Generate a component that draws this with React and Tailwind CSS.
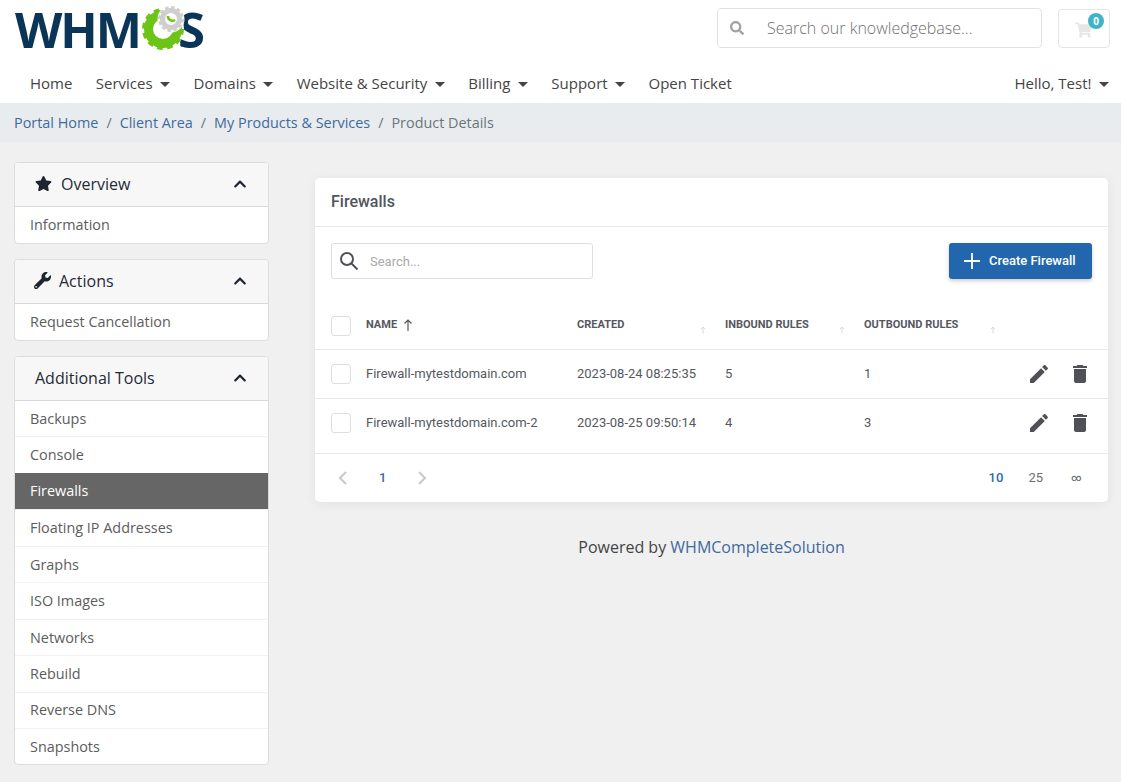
import React from "react";
import {
  FaChevronUp,
  FaSearch,
  FaShoppingCart,
  FaStar,
  FaWrench,
} from "react-icons/fa";

const NAV_ITEMS = [
  { label: "Home" },
  { label: "Services", caret: true },
  { label: "Domains", caret: true },
  { label: "Website & Security", caret: true },
  { label: "Billing", caret: true },
  { label: "Support", caret: true },
  { label: "Open Ticket" },
];

const TOOLS = [
  "Backups",
  "Console",
  "Firewalls",
  "Floating IP Addresses",
  "Graphs",
  "ISO Images",
  "Networks",
  "Rebuild",
  "Reverse DNS",
  "Snapshots",
];

const FIREWALLS = [
  { name: "Firewall-mytestdomain.com", created: "2023-08-24 08:25:35", inbound: 5, outbound: 1, height: "h-[49px]" },
  { name: "Firewall-mytestdomain.com-2", created: "2023-08-25 09:50:14", inbound: 4, outbound: 3, height: "h-[55px] pb-[6px]" },
];

const Caret = () => (
  <span className="ml-[7.5px] inline-block w-0 h-0 border-x-[5px] border-x-transparent border-t-[5px] border-t-[#444] align-[2px]" />
);

const Logo = () => (
  <div className="relative w-[200px] h-[60px] select-none">
    <div className="flex font-['Open_Sans',sans-serif] font-bold text-[49px] leading-[58px] tracking-[-2px] text-[#0b3556]">
      <span>WHM</span>
      <span className="ml-[38px]">S</span>
    </div>
    <svg className="absolute left-[124px] top-0 w-[64px] h-[52px]" viewBox="0 0 64 52">
      <circle cx="24" cy="29" r="21" fill="#fff" />
      <circle cx="24" cy="29" r="14.5" fill="none" stroke="#6cc417" strokeWidth="9" />
      <circle cx="24" cy="29" r="18.5" fill="none" stroke="#6cc417" strokeWidth="5" strokeDasharray="5.4 4.3" />
      <circle cx="32" cy="19" r="13.5" fill="#fff" />
      <circle cx="32" cy="19" r="8.5" fill="none" stroke="#cfcfcf" strokeWidth="5" />
      <circle cx="32" cy="19" r="11.5" fill="none" stroke="#cfcfcf" strokeWidth="3" strokeDasharray="3.4 2.6" />
      <path d="M29 16a4.5 4.5 0 0 0 7 4" fill="none" stroke="#6cc417" strokeWidth="2.5" />
    </svg>
  </div>
);

const SidePanel = ({ icon, title, items, active }) => (
  <div className="mb-[15.5px] bg-white rounded border border-[#dcdcdc] overflow-hidden font-['Open_Sans',sans-serif]">
    <div className="h-[44px] pb-[2px] bg-[#f7f7f7] border-b border-[#d8d8d8] flex items-center pl-5 pr-[21px] text-[#1f2a38] text-[16px]">
      {icon}
      <span>{title}</span>
      <FaChevronUp className="ml-auto w-[14px] h-[14px] text-[#1c2530]" />
    </div>
    {items.map((item) => (
      <div
        key={item}
        className={`flex items-center pl-[15px] text-[14.4px] border-b last:border-b-0 border-[#f1f1f1] ${
          item === active ? "-mt-px h-[37.45px] bg-[#666666] text-white" : "h-[36.45px] last:h-[35.5px] text-[#5c5c5c]"
        }`}
      >
        {item}
      </div>
    ))}
  </div>
);

const SortArrow = ({ dark }) => (
  <svg
    className={dark ? "w-[10px] h-[12px] -mt-[2px] text-[#55585f]" : "w-[6px] h-[10px] mt-2 text-[#d5d7da]"}
    viewBox="0 0 10 12"
    fill="none"
    stroke="currentColor"
    strokeWidth={dark ? 1.2 : 1.6}
  >
    <path d="M5 12V1M1.5 4.5 5 1l3.5 3.5" />
  </svg>
);

const Checkbox = () => (
  <div className="w-5 h-5 rounded-[3px] border border-[#dddde6] bg-white" />
);

const EditIcon = () => (
  <svg className="w-6 h-6 text-[#4f5157]" viewBox="0 0 24 24" fill="currentColor">
    <path d="M3 17.25V21h3.75L17.81 9.94l-3.75-3.75L3 17.25zM20.71 7.04c.39-.39.39-1.02 0-1.41l-2.34-2.34c-.39-.39-1.02-.39-1.41 0l-1.83 1.83 3.75 3.75 1.83-1.83z" />
  </svg>
);

const TrashIcon = () => (
  <svg className="w-6 h-6 text-[#4f5157]" viewBox="0 0 24 24" fill="currentColor">
    <path d="M6 19c0 1.1.9 2 2 2h8c1.1 0 2-.9 2-2V7H6v12zM19 4h-3.5l-1-1h-5l-1 1H5v2h14V4z" />
  </svg>
);

const ROW_COLS = "grid grid-cols-[35px_211px_148px_139px_151px_1fr] items-center px-4";

export default function App() {
  return (
    <div className="h-[782px] overflow-hidden bg-[#f0f0f0] font-['Open_Sans',sans-serif]">
      <header className="bg-white">
        <div className="h-[68px] flex items-start pl-[15px] pr-[11px]">
          <Logo />
          <div className="ml-auto mt-2 w-[325px] h-10 border border-[#e2e2e2] rounded flex items-center">
            <FaSearch className="ml-3 w-[14px] h-[14px] text-[#a5a1a0]" />
            <input
              placeholder="Search our knowledgebase..."
              className="ml-[23px] flex-1 min-w-0 outline-none text-[16px] font-light placeholder:text-[#6f6f6f]"
            />
          </div>
          <div className="relative ml-4 mt-[9px] w-[52px] h-[39px] border border-[#e6e6e6] rounded">
            <FaShoppingCart className="absolute left-4 top-3 w-[17px] h-[16px] text-[#e7e7e7]" />
            <span className="absolute left-[29px] top-[3px] w-4 h-4 rounded-full bg-[#3fb4c6] text-white text-[10px] font-bold flex items-center justify-center">
              0
            </span>
          </div>
        </div>
        <nav className="h-[35px] pb-1 flex items-center pl-[30px] pr-3 text-[15px] text-[#444] gap-[23.4px]">
          {NAV_ITEMS.map((item) => (
            <span key={item.label}>
              {item.label}
              {item.caret && <Caret />}
            </span>
          ))}
          <span className="ml-auto">
            Hello, Test!
            <Caret />
          </span>
        </nav>
      </header>

      <div className="h-[39px] bg-[#e9ecef] flex items-center px-[14px] text-[14.4px] text-[#3f6a9c]">
        <span>Portal Home</span>
        <span className="px-2 text-[#6c757d]">/</span>
        <span>Client Area</span>
        <span className="px-2 text-[#6c757d]">/</span>
        <span>My Products &amp; Services</span>
        <span className="px-2 text-[#6c757d]">/</span>
        <span className="text-[#6c757d]">Product Details</span>
      </div>

      <div className="flex pl-[14px] gap-[46px]">
        <aside className="w-[255px] pt-5 shrink-0">
          <SidePanel icon={<FaStar className="w-[17px] h-[17px] mr-[9px] text-[#1c2530]" />} title="Overview" items={["Information"]} />
          <SidePanel icon={<FaWrench className="w-[17px] h-[17px] -ml-px mr-2 text-[#1c2530]" />} title="Actions" items={["Request Cancellation"]} />
          <SidePanel title="Additional Tools" items={TOOLS} active="Firewalls" />
        </aside>

        <main className="w-[793px] pt-9">
          <div className="bg-white rounded-[5px] shadow-[0_2px_12px_rgba(0,0,0,0.06)] font-['Roboto',sans-serif]">
            <div className="h-[49px] border-b border-[#e8e8ee] flex items-center px-4 text-[16px] font-medium text-[#51545c]">
              Firewalls
            </div>
            <div className="flex items-center justify-between px-4 pt-4 pb-[22px]">
              <div className="w-[262px] h-9 border border-[#dddde6] rounded-[3px] flex items-center">
                <svg className="ml-[7px] w-[20px] h-[20px] text-[#4f5157]" viewBox="0 0 20 20" fill="none" stroke="currentColor" strokeWidth="2">
                  <circle cx="8" cy="8" r="6" />
                  <path d="m12.5 12.5 6 6" />
                </svg>
                <input
                  placeholder="Search..."
                  className="ml-[11px] pt-[1px] flex-1 min-w-0 outline-none text-[13px] placeholder:text-[#a9a9a9]"
                />
              </div>
              <button className="w-[143px] h-9 bg-[#2267ad] rounded-[3px] shadow-[0_2px_4px_rgba(0,0,0,0.2)] flex items-center pl-[15px] text-white text-[13px] font-medium">
                <svg className="w-4 h-4 mr-[9px]" viewBox="0 0 16 16" stroke="currentColor" strokeWidth="1.8">
                  <path d="M8 0v16M0 8h16" />
                </svg>
                Create Firewall
              </button>
            </div>

            <div className={`${ROW_COLS} h-[49px] pt-[1px] border-b border-[#e8e8ee] text-[11px] font-bold uppercase text-[#55585f]`}>
              <Checkbox />
              <div className="flex items-center gap-[6px]">
                <span>Name</span>
                <SortArrow dark />
              </div>
              <div className="flex justify-between pr-[19px]">
                <span>Created</span>
                <SortArrow />
              </div>
              <div className="flex justify-between pr-[19px]">
                <span>Inbound Rules</span>
                <SortArrow />
              </div>
              <div className="flex justify-between pr-[19px]">
                <span>Outbound Rules</span>
                <SortArrow />
              </div>
              <div />
            </div>

            {FIREWALLS.map((fw) => (
              <div key={fw.name} className={`${ROW_COLS} ${fw.height} border-b border-[#e8e8ee] text-[13px] text-[#55585f]`}>
                <Checkbox />
                <div>{fw.name}</div>
                <div>{fw.created}</div>
                <div>{fw.inbound}</div>
                <div>{fw.outbound}</div>
                <div className="flex justify-end gap-[17px]">
                  <EditIcon />
                  <TrashIcon />
                </div>
              </div>
            ))}

            <div className="h-[48px] flex items-center pl-[22px] pr-7 text-[13px] text-[#6b6e75]">
              <svg className="w-[12px] h-[14px] text-[#c9c9c9]" viewBox="0 0 12 14" fill="none" stroke="currentColor" strokeWidth="2">
                <path d="M9 1 3 7l6 6" />
              </svg>
              <span className="ml-[30px] font-medium text-[#3f6a9c]">1</span>
              <svg className="ml-[30px] w-[12px] h-[14px] text-[#c9c9c9]" viewBox="0 0 12 14" fill="none" stroke="currentColor" strokeWidth="2">
                <path d="m3 1 6 6-6 6" />
              </svg>
              <span className="ml-auto font-medium text-[#2f6aad]">10</span>
              <span className="ml-[25px]">25</span>
              <span className="ml-[28px] pb-[2px] w-[9px] text-[10px] font-medium">∞</span>
            </div>
          </div>

          <p className="mt-[33px] text-center text-[16px] text-[#444]">
            Powered by <span className="text-[#3f6a9c]">WHMCompleteSolution</span>
          </p>
        </main>
      </div>
    </div>
  );
}
